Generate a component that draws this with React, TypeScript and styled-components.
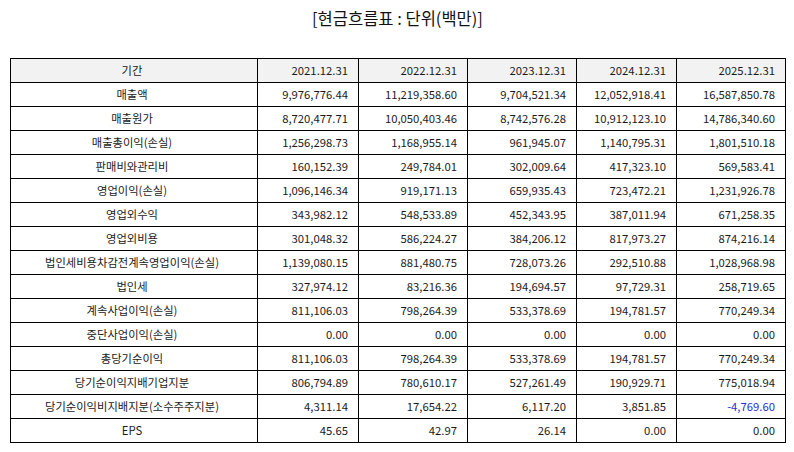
import React from "react";
import styled, { createGlobalStyle } from "styled-components";

const GlobalStyle = createGlobalStyle`
  html, body {
    margin: 0;
    padding: 0;
    background: #fff;
  }
  body {
    font-family: "Noto Sans CJK KR", "Noto Sans", sans-serif;
    color: #111;
  }
`;

const Page = styled.div`
  width: 794px;
  height: 452px;
  padding: 6px 9px 0 10px;
  box-sizing: border-box;
`;

const Title = styled.h2`
  margin: 0;
  height: 52px;
  text-align: center;
  font-size: 16.5px;
  font-weight: 400;
  line-height: 24px;
`;

const Table = styled.table`
  width: 775px;
  border-collapse: collapse;
  table-layout: fixed;
  font-size: 11.3px;
`;

const Cell = styled.td<{ $label?: boolean; $head?: boolean; $neg?: boolean }>`
  height: 23px;
  padding: 0 10px 0 6px;
  border: 1px solid #000;
  text-align: ${(p) => (p.$label ? "center" : "right")};
  background: ${(p) => (p.$head ? "#f2f2f2" : "#fff")};
  color: ${(p) => (p.$neg ? "#2b2bd6" : "#1a1a1a")};
  font-weight: 400;
  white-space: nowrap;
  line-height: 23px;
`;

const widths = [247, 101, 109, 109, 100, 109];
const periods = ["2021.12.31", "2022.12.31", "2023.12.31", "2024.12.31", "2025.12.31"];

const rows: [string, string[]][] = [
  ["매출액", ["9,976,776.44", "11,219,358.60", "9,704,521.34", "12,052,918.41", "16,587,850.78"]],
  ["매출원가", ["8,720,477.71", "10,050,403.46", "8,742,576.28", "10,912,123.10", "14,786,340.60"]],
  ["매출총이익(손실)", ["1,256,298.73", "1,168,955.14", "961,945.07", "1,140,795.31", "1,801,510.18"]],
  ["판매비와관리비", ["160,152.39", "249,784.01", "302,009.64", "417,323.10", "569,583.41"]],
  ["영업이익(손실)", ["1,096,146.34", "919,171.13", "659,935.43", "723,472.21", "1,231,926.78"]],
  ["영업외수익", ["343,982.12", "548,533.89", "452,343.95", "387,011.94", "671,258.35"]],
  ["영업외비용", ["301,048.32", "586,224.27", "384,206.12", "817,973.27", "874,216.14"]],
  ["법인세비용차감전계속영업이익(손실)", ["1,139,080.15", "881,480.75", "728,073.26", "292,510.88", "1,028,968.98"]],
  ["법인세", ["327,974.12", "83,216.36", "194,694.57", "97,729.31", "258,719.65"]],
  ["계속사업이익(손실)", ["811,106.03", "798,264.39", "533,378.69", "194,781.57", "770,249.34"]],
  ["중단사업이익(손실)", ["0.00", "0.00", "0.00", "0.00", "0.00"]],
  ["총당기순이익", ["811,106.03", "798,264.39", "533,378.69", "194,781.57", "770,249.34"]],
  ["당기순이익지배기업지분", ["806,794.89", "780,610.17", "527,261.49", "190,929.71", "775,018.94"]],
  ["당기순이익비지배지분(소수주주지분)", ["4,311.14", "17,654.22", "6,117.20", "3,851.85", "-4,769.60"]],
  ["EPS", ["45.65", "42.97", "26.14", "0.00", "0.00"]],
];

export default function App() {
  return (
    <>
      <GlobalStyle />
      <Page>
        <Title>[현금흐름표 : 단위(백만)]</Title>
        <Table>
          <colgroup>
            {widths.map((w, i) => (
              <col key={i} style={{ width: w }} />
            ))}
          </colgroup>
          <thead>
            <tr>
              <Cell as="th" $label $head>기간</Cell>
              {periods.map((p) => (
                <Cell as="th" key={p} $head>{p}</Cell>
              ))}
            </tr>
          </thead>
          <tbody>
            {rows.map(([label, vals]) => (
              <tr key={label}>
                <Cell $label>{label}</Cell>
                {vals.map((v, i) => (
                  <Cell key={i} $neg={v.startsWith("-")}>{v}</Cell>
                ))}
              </tr>
            ))}
          </tbody>
        </Table>
      </Page>
    </>
  );
}
